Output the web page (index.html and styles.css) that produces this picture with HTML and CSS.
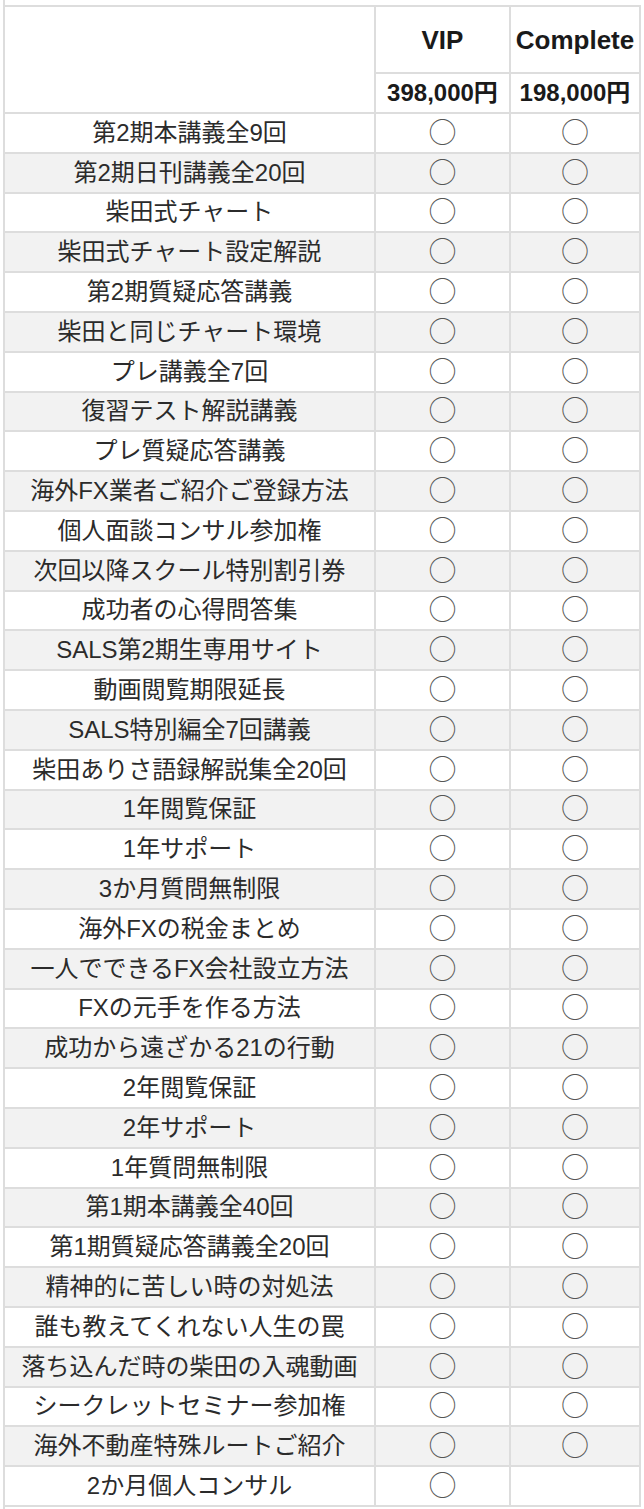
FILE: index.html
```html
<!DOCTYPE html>
<html lang="ja">
<head>
    <meta charset="UTF-8">
    <meta name="viewport" content="width=device-width, initial-scale=1.0">
    <title>コース比較</title>
    <link rel="stylesheet" href="styles.css">
</head>
<body>
    <div class="edge"></div>
    <table class="plan">
        <colgroup>
            <col class="col-item">
            <col class="col-vip">
            <col class="col-comp">
        </colgroup>
        <thead>
            <tr class="head-name">
                <th rowspan="2"></th>
                <th>VIP</th>
                <th>Complete</th>
            </tr>
            <tr class="head-price">
                <th>398,000円</th>
                <th>198,000円</th>
            </tr>
        </thead>
        <tbody>
            <tr><td>第2期本講義全9回</td><td><span class="mark">○</span></td><td><span class="mark">○</span></td></tr>
            <tr><td>第2期日刊講義全20回</td><td><span class="mark">○</span></td><td><span class="mark">○</span></td></tr>
            <tr><td>柴田式チャート</td><td><span class="mark">○</span></td><td><span class="mark">○</span></td></tr>
            <tr><td>柴田式チャート設定解説</td><td><span class="mark">○</span></td><td><span class="mark">○</span></td></tr>
            <tr><td>第2期質疑応答講義</td><td><span class="mark">○</span></td><td><span class="mark">○</span></td></tr>
            <tr><td>柴田と同じチャート環境</td><td><span class="mark">○</span></td><td><span class="mark">○</span></td></tr>
            <tr><td>プレ講義全7回</td><td><span class="mark">○</span></td><td><span class="mark">○</span></td></tr>
            <tr><td>復習テスト解説講義</td><td><span class="mark">○</span></td><td><span class="mark">○</span></td></tr>
            <tr><td>プレ質疑応答講義</td><td><span class="mark">○</span></td><td><span class="mark">○</span></td></tr>
            <tr><td>海外FX業者ご紹介ご登録方法</td><td><span class="mark">○</span></td><td><span class="mark">○</span></td></tr>
            <tr><td>個人面談コンサル参加権</td><td><span class="mark">○</span></td><td><span class="mark">○</span></td></tr>
            <tr><td>次回以降スクール特別割引券</td><td><span class="mark">○</span></td><td><span class="mark">○</span></td></tr>
            <tr><td>成功者の心得問答集</td><td><span class="mark">○</span></td><td><span class="mark">○</span></td></tr>
            <tr><td>SALS第2期生専用サイト</td><td><span class="mark">○</span></td><td><span class="mark">○</span></td></tr>
            <tr><td>動画閲覧期限延長</td><td><span class="mark">○</span></td><td><span class="mark">○</span></td></tr>
            <tr><td>SALS特別編全7回講義</td><td><span class="mark">○</span></td><td><span class="mark">○</span></td></tr>
            <tr><td>柴田ありさ語録解説集全20回</td><td><span class="mark">○</span></td><td><span class="mark">○</span></td></tr>
            <tr><td>1年閲覧保証</td><td><span class="mark">○</span></td><td><span class="mark">○</span></td></tr>
            <tr><td>1年サポート</td><td><span class="mark">○</span></td><td><span class="mark">○</span></td></tr>
            <tr><td>3か月質問無制限</td><td><span class="mark">○</span></td><td><span class="mark">○</span></td></tr>
            <tr><td>海外FXの税金まとめ</td><td><span class="mark">○</span></td><td><span class="mark">○</span></td></tr>
            <tr><td>一人でできるFX会社設立方法</td><td><span class="mark">○</span></td><td><span class="mark">○</span></td></tr>
            <tr><td>FXの元手を作る方法</td><td><span class="mark">○</span></td><td><span class="mark">○</span></td></tr>
            <tr><td>成功から遠ざかる21の行動</td><td><span class="mark">○</span></td><td><span class="mark">○</span></td></tr>
            <tr><td>2年閲覧保証</td><td><span class="mark">○</span></td><td><span class="mark">○</span></td></tr>
            <tr><td>2年サポート</td><td><span class="mark">○</span></td><td><span class="mark">○</span></td></tr>
            <tr><td>1年質問無制限</td><td><span class="mark">○</span></td><td><span class="mark">○</span></td></tr>
            <tr><td>第1期本講義全40回</td><td><span class="mark">○</span></td><td><span class="mark">○</span></td></tr>
            <tr><td>第1期質疑応答講義全20回</td><td><span class="mark">○</span></td><td><span class="mark">○</span></td></tr>
            <tr><td>精神的に苦しい時の対処法</td><td><span class="mark">○</span></td><td><span class="mark">○</span></td></tr>
            <tr><td>誰も教えてくれない人生の罠</td><td><span class="mark">○</span></td><td><span class="mark">○</span></td></tr>
            <tr><td>落ち込んだ時の柴田の入魂動画</td><td><span class="mark">○</span></td><td><span class="mark">○</span></td></tr>
            <tr><td>シークレットセミナー参加権</td><td><span class="mark">○</span></td><td><span class="mark">○</span></td></tr>
            <tr><td>海外不動産特殊ルートご紹介</td><td><span class="mark">○</span></td><td><span class="mark">○</span></td></tr>
            <tr><td>2か月個人コンサル</td><td><span class="mark">○</span></td><td></td></tr>
        </tbody>
    </table>
    <div class="edge"></div>
</body>
</html>
```

FILE: styles.css
```css
/* 全体 */
body {
    margin: 0;
    padding: 0;
    background: #fff;
    font-family: "Liberation Sans", "Noto Sans CJK JP", sans-serif;
    color: #2b2b2b;
}
.edge {
    height: 5px;
    margin-left: 3px;
    border-left: 2px solid #ddd;
}

/* 比較表 */
.plan {
    width: 638px;
    margin: 0 3px;
    border-collapse: collapse;
    table-layout: fixed;
}
.col-item {
    width: 371px;
}
.col-vip {
    width: 135px;
}
.plan th, .plan td {
    border: 2px solid #ddd;
    padding: 0;
    text-align: center;
    vertical-align: middle;
    white-space: nowrap;
    line-height: 28px;
}
.plan th {
    color: #1a1a1a;
    font-weight: bold;
}
.head-name {
    height: 67px;
}
.head-name th {
    font-size: 26px;
}
.head-price {
    height: 40px;
}
.head-price th {
    font-size: 24px;
}
.plan tbody tr {
    height: 39.8px;
}
.plan tbody td {
    font-size: 24px;
}
.plan tbody tr:nth-child(even) {
    background-color: #f2f2f2;
}
.mark {
    display: inline-block;
    vertical-align: middle;
    margin-bottom: 4px;
    font-family: "Noto Sans CJK JP", sans-serif;
    font-size: 28px;
    font-weight: 300;
    line-height: 28px;
    color: #555;
}
```
